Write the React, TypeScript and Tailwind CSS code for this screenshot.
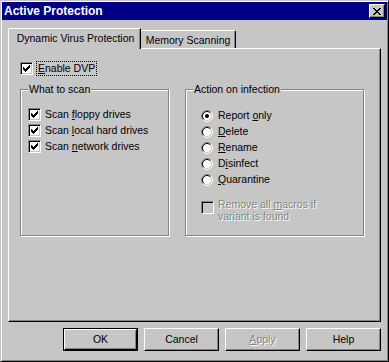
import React from 'react';

const FONT = { fontFamily: '"Liberation Sans", Arial, sans-serif' };

function Check({ checked, disabled }: { checked?: boolean; disabled?: boolean }) {
  // classic 3px-tall check columns
  const cols = [3, 4, 5, 6, 7, 8, 9];
  const tops = [5, 6, 7, 6, 5, 4, 3];
  return (
    <div
      className={`w-[13px] h-[13px] shrink-0 border border-t-[#848484] border-l-[#848484] border-b-white border-r-white shadow-[inset_1px_1px_0_#000,inset_-1px_-1px_0_#c6c6c6] ${
        disabled ? 'bg-[#c6c6c6]' : 'bg-white'
      }`}
    >
      {checked && (
        <svg width="11" height="11" viewBox="1 1 11 11" shapeRendering="crispEdges">
          {cols.map((x, i) => (
            <rect key={x} x={x} y={tops[i]} width="1" height="3" fill="#000" />
          ))}
        </svg>
      )}
    </div>
  );
}

function Radio({ checked }: { checked?: boolean }) {
  return (
    <svg width="12" height="12" viewBox="0 0 12 12" className="shrink-0">
      <circle cx="6" cy="6" r="4.5" fill="#fff" />
      <path d="M9.9 2.1 A5.5 5.5 0 0 0 2.1 9.9" fill="none" stroke="#848484" strokeWidth="1" />
      <path d="M9.9 2.1 A5.5 5.5 0 0 1 2.1 9.9" fill="none" stroke="#fff" strokeWidth="1" />
      <path d="M9.2 2.8 A4.5 4.5 0 0 0 2.8 9.2" fill="none" stroke="#000" strokeWidth="1" />
      <path d="M9.2 2.8 A4.5 4.5 0 0 1 2.8 9.2" fill="none" stroke="#c6c6c6" strokeWidth="1" />
      {checked && <circle cx="6" cy="6" r="2" fill="#000" />}
    </svg>
  );
}

function Group({ label, width, children, pl, pt }: { label: string; width: string; children: React.ReactNode; pl: string; pt: string }) {
  return (
    <div className={`relative h-[147px] border border-[#848484] shadow-[1px_1px_0_#fff,inset_1px_1px_0_#fff] ${width} ${pl} ${pt}`}>
      <span className="absolute left-[7px] top-[-7px] px-[1px] bg-[#c6c6c6] leading-[13px]">{label}</span>
      {children}
    </div>
  );
}

function Button({ children, isDefault, disabled }: { children: React.ReactNode; isDefault?: boolean; disabled?: boolean }) {
  const bevel =
    'border border-t-white border-l-white border-b-black border-r-black shadow-[inset_-1px_-1px_0_#848484]';
  return (
    <div className={`w-[75px] h-[23px] ${isDefault ? 'border border-black' : ''}`}>
      <div
        className={`w-full h-full flex items-center justify-center ${bevel} ${
          disabled ? 'text-[#848484] [text-shadow:1px_1px_0_#fff]' : ''
        }`}
      >
        {children}
      </div>
    </div>
  );
}

export default function App() {
  const scanItems: [string, string, string][] = [
    ['Scan ', 'f', 'loppy drives'],
    ['Scan ', 'l', 'ocal hard drives'],
    ['Scan ', 'n', 'etwork drives'],
  ];
  const actions: [string, string, string][] = [
    ['Report ', 'o', 'nly'],
    ['', 'D', 'elete'],
    ['', 'R', 'ename'],
    ['D', 'i', 'sinfect'],
    ['', 'Q', 'uarantine'],
  ];

  return (
    <div
      style={FONT}
      className="w-[389px] h-[362px] bg-[#c6c6c6] text-black text-[10.5px] p-[1px] border border-t-[#c6c6c6] border-l-[#c6c6c6] border-b-black border-r-black shadow-[inset_1px_1px_0_#fff,inset_-1px_-1px_0_#848484] flex flex-col"
    >
      {/* title bar */}
      <div className="h-[18px] bg-[#000084] flex items-center justify-between pl-[2px] pr-[2px]">
        <span className="text-white font-bold text-[12px] leading-[14px]">Active Protection</span>
        <div className="w-[16px] h-[14px] bg-[#c6c6c6] border border-t-white border-l-white border-b-black border-r-black shadow-[inset_-1px_-1px_0_#848484] flex items-center justify-center">
          <svg width="8" height="7" viewBox="0 0 8 7" shapeRendering="crispEdges">
            <path d="M0 0h2v1h-2zM6 0h2v1h-2zM1 1h2v1h-2zM5 1h2v1h-2zM2 2h4v1h-4zM3 3h2v1h-2zM2 4h4v1h-4zM1 5h2v1h-2zM5 5h2v1h-2zM0 6h2v1h-2zM6 6h2v1h-2z" fill="#000" />
          </svg>
        </div>
      </div>

      {/* tabs */}
      <div className="mt-[8px] h-[20px] flex items-start pl-[6px]">
        <div className="relative z-10 w-[133px] h-[21px] bg-[#c6c6c6] border-l border-t border-r border-l-white border-t-white border-r-black rounded-tl-[2px] shadow-[inset_-1px_0_0_#848484] flex justify-center pl-[2px] pt-[3px] leading-[13px]">
          Dynamic Virus Protection
        </div>
        <div className="mt-[2px] w-[95px] h-[18px] border-t border-r border-t-white border-r-black rounded-tr-[2px] shadow-[inset_-1px_0_0_#848484] flex justify-center pt-[3px] leading-[13px]">
          Memory Scanning
        </div>
      </div>

      {/* panel */}
      <div className="mx-[6px] h-[274px] border border-t-white border-l-white border-b-black border-r-black shadow-[inset_-1px_-1px_0_#848484] pl-[11px] pt-[13px]">
        <div className="flex items-center h-[13px]">
          <Check checked />
          <span className="ml-[3px] px-[1px] border border-dotted border-black leading-[13px]">
            <u>E</u>nable DVP
          </span>
        </div>

        <div className="mt-[14px] flex gap-[16px]">
          <Group label="What to scan" width="w-[149px]" pl="pl-[7px]" pt="pt-[18px]">
            <div className="flex flex-col gap-[3px]">
              {scanItems.map(([a, u, b]) => (
                <div key={b} className="flex items-center gap-[4px] h-[13px] leading-[13px]">
                  <Check checked />
                  <span>
                    {a}
                    <u>{u}</u>
                    {b}
                  </span>
                </div>
              ))}
            </div>
          </Group>

          <Group label="Action on infection" width="w-[179px]" pl="pl-[15px]" pt="pt-[19px]">
            <div className="flex flex-col gap-[3px]">
              {actions.map(([a, u, b], i) => (
                <div key={b} className="flex items-center gap-[5px] h-[13px] leading-[13px]">
                  <Radio checked={i === 0} />
                  <span>
                    {a}
                    <u>{u}</u>
                    {b}
                  </span>
                </div>
              ))}
            </div>
            <div className="mt-[12px] flex items-start gap-[4px]">
              <div className="mt-[3px]">
                <Check disabled />
              </div>
              <span className="leading-[12px] text-[#848484] [text-shadow:1px_1px_0_#fff]">
                Remove all <u>m</u>acros if
                <br />
                variant is found
              </span>
            </div>
          </Group>
        </div>
      </div>

      {/* buttons */}
      <div className="mt-[6px] flex justify-end gap-[6px] pr-[6px] leading-[13px]">
        <Button isDefault>OK</Button>
        <Button>Cancel</Button>
        <Button disabled>
          <span>
            <u>A</u>pply
          </span>
        </Button>
        <Button>Help</Button>
      </div>
    </div>
  );
}
